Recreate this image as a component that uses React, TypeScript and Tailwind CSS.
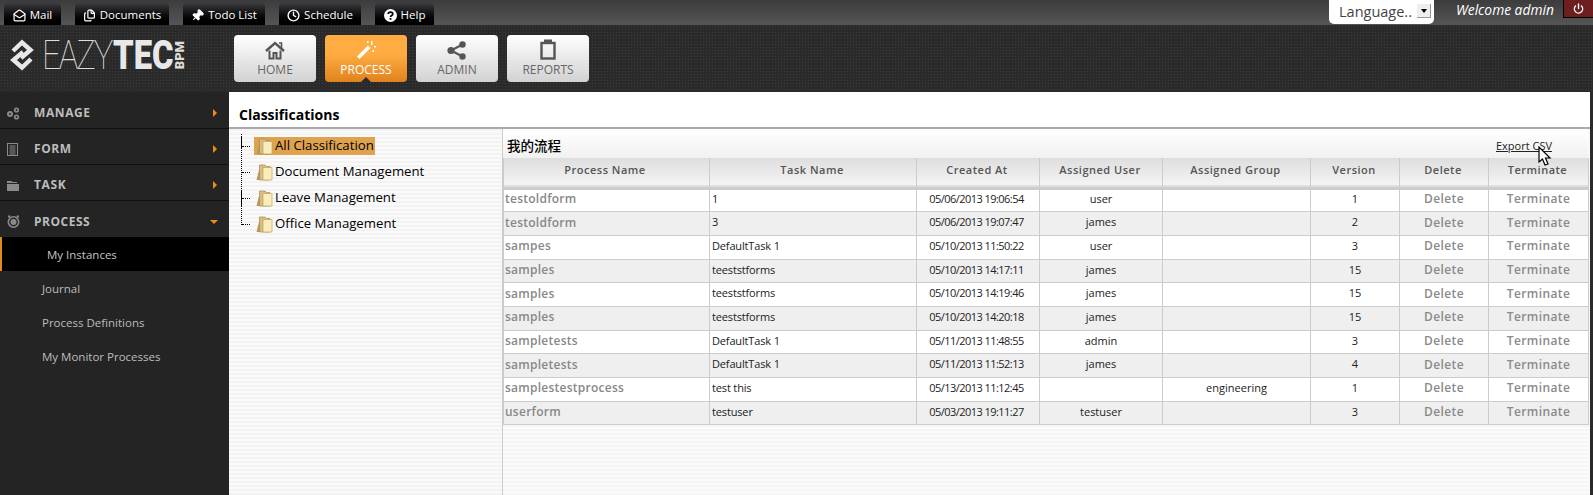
import { MailOpen, Files, Pin, Clock, Power } from 'lucide-react';

const font = "font-['Open_Sans','Noto_Sans_CJK_SC',sans-serif]";

function HelpIcon() {
	return (
		<svg width="13" height="13" viewBox="0 0 13 13">
			<circle cx="6.5" cy="6.5" r="6.5" fill="white" />
			<path d="M4.2 5 C4.3 2.6 8.8 2.6 8.8 5 C8.8 6.6 6.5 6.4 6.5 8" fill="none" stroke="black" strokeWidth="1.7" />
			<rect x="5.6" y="9" width="1.8" height="1.8" fill="black" />
		</svg>
	);
}

function HomeIcon() {
	return (
		<svg width="20" height="19" viewBox="0 0 20 19" fill="none" stroke="#555">
			<path d="M1 10 L10 2 L19 10" strokeWidth="2.4" />
			<path d="M14 2 H16.5 V7" strokeWidth="1.6" />
			<path d="M4.5 9.5 V17.5 H8.5 V12 H11.5 V17.5 H15.5 V9.5" strokeWidth="2" />
		</svg>
	);
}

function WandIcon() {
	return (
		<svg width="20" height="20" viewBox="0 0 20 20" fill="white">
			<path d="M1 16.5 L12 5.5 L14.5 8 L3.5 19 Z" />
			<rect x="15" y="1" width="1.5" height="4" />
			<rect x="18" y="6" width="2" height="1.5" />
			<rect x="11" y="1" width="1.5" height="2" />
			<rect x="16.5" y="10" width="1.5" height="2" />
		</svg>
	);
}

function ShareIcon() {
	return (
		<svg width="20" height="19" viewBox="0 0 20 19" fill="#555">
			<circle cx="4" cy="9.5" r="3.6" />
			<circle cx="15.5" cy="3.5" r="3.2" />
			<circle cx="15.5" cy="15.5" r="3.2" />
			<path d="M4 9.5 L15.5 3.5 M4 9.5 L15.5 15.5" stroke="#555" strokeWidth="2" />
		</svg>
	);
}

function ReportIcon() {
	return (
		<svg width="16" height="21" viewBox="0 0 16 21" fill="none" stroke="#555">
			<rect x="1.5" y="4" width="13" height="15.5" strokeWidth="2.4" />
			<rect x="4.5" y="1" width="7" height="3.5" fill="#555" strokeWidth="1" />
		</svg>
	);
}

function ManageIcon() {
	return (
		<svg width="13" height="13" viewBox="0 0 13 13" fill="#8a8a8a">
			<circle cx="3" cy="7" r="3" />
			<circle cx="9.5" cy="3" r="2.6" />
			<circle cx="9.5" cy="10" r="2.6" />
			<circle cx="3" cy="7" r="1" fill="#242424" />
			<circle cx="9.5" cy="3" r="0.9" fill="#242424" />
			<circle cx="9.5" cy="10" r="0.9" fill="#242424" />
		</svg>
	);
}

function FormIcon() {
	return (
		<svg width="11" height="13" viewBox="0 0 11 13" fill="none" stroke="#8a8a8a">
			<rect x="0.5" y="0.5" width="10" height="12" />
			<path d="M2.5 3 H8.5 M2.5 5 H8.5 M2.5 7 H8.5 M2.5 9 H8.5 M2.5 11 H8.5" />
		</svg>
	);
}

function TaskIcon() {
	return (
		<svg width="12" height="11" viewBox="0 0 12 11" fill="#8a8a8a">
			<path d="M0 1 H4.5 L5.5 2 H10 V3 H0 Z" />
			<rect x="0" y="4" width="12" height="7" />
		</svg>
	);
}

function ProcessIcon() {
	return (
		<svg width="13" height="13" viewBox="0 0 13 13">
			<circle cx="6.5" cy="7" r="5.2" fill="none" stroke="#8a8a8a" strokeWidth="1.6" />
			<circle cx="6.5" cy="7" r="3" fill="#8a8a8a" />
			<rect x="1" y="0.5" width="2.4" height="2" fill="#8a8a8a" />
			<rect x="9.6" y="0.5" width="2.4" height="2" fill="#8a8a8a" />
		</svg>
	);
}

const topTabs = [
	{ label: 'Mail', w: 'w-[57px]', icon: <MailOpen size={13} strokeWidth={2.2} /> },
	{ label: 'Documents', w: 'w-[94px]', icon: <Files size={13} strokeWidth={2.2} /> },
	{ label: 'Todo List', w: 'w-[82px]', icon: <Pin size={13} fill="white" className="rotate-45" /> },
	{ label: 'Schedule', w: 'w-[82px]', icon: <Clock size={13} strokeWidth={2.5} /> },
	{ label: 'Help', w: 'w-[59px]', icon: <HelpIcon /> },
];

const navButtons = [
	{ label: 'HOME', icon: <HomeIcon />, active: false },
	{ label: 'PROCESS', icon: <WandIcon />, active: true },
	{ label: 'ADMIN', icon: <ShareIcon />, active: false },
	{ label: 'REPORTS', icon: <ReportIcon />, active: false },
];

const sideMenu = [
	{ label: 'MANAGE', icon: <ManageIcon /> },
	{ label: 'FORM', icon: <FormIcon /> },
	{ label: 'TASK', icon: <TaskIcon /> },
];

const rows = [
	['testoldform', '1', '05/06/2013 19:06:54', 'user', '', '1'],
	['testoldform', '3', '05/06/2013 19:07:47', 'james', '', '2'],
	['sampes', 'DefaultTask 1', '05/10/2013 11:50:22', 'user', '', '3'],
	['samples', 'teeststforms', '05/10/2013 14:17:11', 'james', '', '15'],
	['samples', 'teeststforms', '05/10/2013 14:19:46', 'james', '', '15'],
	['samples', 'teeststforms', '05/10/2013 14:20:18', 'james', '', '15'],
	['sampletests', 'DefaultTask 1', '05/11/2013 11:48:55', 'admin', '', '3'],
	['sampletests', 'DefaultTask 1', '05/11/2013 11:52:13', 'james', '', '4'],
	['samplestestprocess', 'test this', '05/13/2013 11:12:45', '', 'engineering', '1'],
	['userform', 'testuser', '05/03/2013 19:11:27', 'testuser', '', '3'],
];

const headers = [
	{ label: 'Process Name', w: 'w-[206px]' },
	{ label: 'Task Name', w: 'w-[207px]' },
	{ label: 'Created At', w: 'w-[123px]' },
	{ label: 'Assigned User', w: 'w-[123px]' },
	{ label: 'Assigned Group', w: 'w-[148px]' },
	{ label: 'Version', w: 'w-[89px]' },
	{ label: 'Delete', w: 'w-[89px]' },
	{ label: 'Terminate', w: 'w-[100px]' },
];

const tree = ['All Classification', 'Document Management', 'Leave Management', 'Office Management'];

function FolderIcon() {
	return (
		<svg width="17" height="17" viewBox="0 0 17 17" className="shrink-0">
			<path d="M0.5 16 L3 6 H7 V16 Z" fill="#b99a5c" />
			<path d="M3.5 16 V1 H9 L10.5 2.5 H14 V16 Z" fill="#d8bd80" stroke="#a88a52" strokeWidth="0.7" />
			<path d="M7 16 V3.5 H16 V16 Z" fill="#fbedbb" stroke="#bfa066" strokeWidth="0.7" />
		</svg>
	);
}

function Logo() {
	return (
		<div className="flex w-[190px] items-center">
			<svg width="24" height="32" viewBox="0 0 24 32" className="ml-[10px] shrink-0">
				<path d="M3 12 L12 3.5 L20.5 11 L11 19" fill="none" stroke="#e8e8e8" strokeWidth="4.4" />
				<path d="M21 20 L12 28.5 L3.5 21 L13 13" fill="none" stroke="#e8e8e8" strokeWidth="4.4" />
			</svg>
			<span className="ml-[8px] flex h-[32px] w-[128px] origin-left scale-x-[0.8] items-center whitespace-nowrap font-['Roboto',sans-serif] text-[41px] leading-none text-[#ddd]">
				<span className="font-thin tracking-[-2.5px]">EAZY</span>
				<span className="ml-[2px] font-black text-[#e8e8e8]">TEC</span>
			</span>
			<span className="ml-[4px] w-[12px] rotate-180 whitespace-nowrap font-['Roboto',sans-serif] text-[13px] font-black leading-[12px] text-[#ddd] [writing-mode:vertical-rl]">BPM</span>
		</div>
	);
}

export default function App() {
	return (
		<div className={`flex h-[495px] w-[1593px] flex-col overflow-hidden bg-[#2a2a2a] ${font}`}>
			{/* top strip */}
			<div className="flex h-[25px] items-end justify-between bg-gradient-to-b from-[#3c3c3c] to-[#565656]">
				<div className="flex gap-[14px] pl-[4px]">
					{topTabs.map((t) => (
						<div key={t.label} className={`flex h-[23px] ${t.w} items-center justify-center gap-[4px] rounded-t-[5px] bg-gradient-to-b from-[#3f3f44] to-black pt-[3px] text-[11.5px] text-white`}>
							{t.icon}
							<span>{t.label}</span>
						</div>
					))}
				</div>
				<div className="flex h-[25px] items-start">
					<div className="flex h-[24px] w-[105px] items-center justify-between rounded-b-[5px] bg-white pl-[10px] pr-[3px] text-[14.5px] text-[#444]">
						<span>Language..</span>
						<span className="mb-[2px] flex h-[14px] w-[14px] items-center justify-center border-b border-r border-[#999] bg-[#eee]">
							<span className="h-0 w-0 border-x-[3px] border-t-[4px] border-x-transparent border-t-black" />
						</span>
					</div>
					<span className="ml-[22px] w-[107px] whitespace-nowrap text-[13.8px] italic leading-[19px] text-white">Welcome admin</span>
					<div className="flex h-[18px] w-[30px] items-center justify-center border-b border-l border-black bg-[#6d1f1f] text-white">
						<Power size={11} strokeWidth={3} />
					</div>
				</div>
			</div>

			{/* logo + main nav */}
			<div className="flex h-[67px] items-start bg-[#2a2a2a] bg-[radial-gradient(circle,#3d3d3d_0.7px,transparent_1px)] bg-[size:3px_3px]">
				<div className="mt-[14px] w-[234px]">
					<Logo />
				</div>
				<div className="mt-[10px] flex gap-[9px]">
					{navButtons.map((b) => (
						<div key={b.label} className={`relative flex h-[47px] w-[82px] flex-col items-center justify-end rounded-[4px] pb-[4px] text-[12px] ${b.active ? 'bg-gradient-to-b from-[#ffad42] from-40% to-[#e0821c] text-white' : 'bg-gradient-to-b from-white to-[#d2d2d2] text-[#666]'}`}>
							<span className="mb-[1px]">{b.icon}</span>
							<span className="leading-[17px]">{b.label}</span>
							{b.active && <span className="absolute bottom-0 left-1/2 h-0 w-0 -translate-x-1/2 border-x-[5px] border-b-[5px] border-x-transparent border-b-[#2b2b2b]" />}
						</div>
					))}
				</div>
			</div>

			<div className="flex min-h-0 flex-1 pr-[3px]">
				{/* sidebar */}
				<div className="w-[229px] shrink-0 bg-[#242424]">
					{sideMenu.map((m, i) => (
						<div key={m.label} className={`flex items-center border-b border-[#111] pl-[7px] pr-[12px] text-[#bdbdbd] ${i === 0 ? 'h-[37px] pt-[6px]' : 'h-[36px] pt-[5px]'}`}>
							<span className="flex w-[27px]">{m.icon}</span>
							<span className="flex-1 text-[12px] font-bold tracking-[0.6px]">{m.label}</span>
							<span className="h-0 w-0 border-y-[4px] border-l-[4px] border-y-transparent border-l-[#f28c10]" />
						</div>
					))}
					<div className="flex h-[36px] items-center pl-[7px] pr-[11px] pt-[5px] text-[#bdbdbd]">
						<span className="flex w-[27px]"><ProcessIcon /></span>
						<span className="flex-1 text-[12px] font-bold tracking-[0.5px]">PROCESS</span>
						<span className="h-0 w-0 border-x-[4px] border-t-[4px] border-x-transparent border-t-[#f28c10]" />
					</div>
					<div className="flex h-[34px] items-center border-l-2 border-[#e08a1e] bg-black pl-[45px] pt-[1px] text-[11.5px] text-[#c4c4c4]">My Instances</div>
					{['Journal', 'Process Definitions', 'My Monitor Processes'].map((s) => (
						<div key={s} className="flex h-[34px] items-center pl-[42px] pt-[1px] text-[11.5px] text-[#bdbdbd]">{s}</div>
					))}
				</div>

				{/* main panel */}
				<div className="flex min-w-0 flex-1 flex-col bg-white">
					<div className="flex h-[37px] shrink-0 items-center border-b-2 border-[#aaa] pl-[10px] pt-[10px] text-[14px] font-bold text-black">Classifications</div>
					<div className="flex min-h-0 flex-1">
						{/* tree */}
						<div className="relative w-[273px] shrink-0 bg-[repeating-linear-gradient(0deg,#f3f3f3_0px,#f3f3f3_2px,#fafafa_2px,#fafafa_4px)] pl-[25px] pt-[4px]">
							<div className="absolute left-[12px] top-[5px] h-[91px] border-l border-dotted border-black" />
							<div className="absolute left-[12px] top-[7px] h-[12px] border-l border-black" />
							<div className="absolute left-[12px] top-[62px] h-[15px] border-l border-black" />
							{tree.map((t, i) => (
								<div key={t} className="relative flex h-[26px] items-center">
									<span className="absolute left-[-12px] top-[13px] w-[8px] border-t border-dotted border-black" />
									<div className={`flex h-[18px] items-center gap-[2px] whitespace-nowrap pl-[2px] pr-[1px] text-[13.2px] text-black ${i === 0 ? 'bg-[#dfa24f]' : ''}`}>
										<FolderIcon />
										<span>{t}</span>
									</div>
								</div>
							))}
						</div>

						{/* grid */}
						<div className="min-w-0 flex-1 border-l border-[#ccc] bg-[repeating-linear-gradient(0deg,#f6f6f6_0px,#f6f6f6_2px,#fbfbfb_2px,#fbfbfb_4px)]">
							<div className="flex h-[29px] w-[1085px] items-center justify-between rounded-t-[4px] bg-gradient-to-b from-white to-[#f1f1f1] pl-[4px] pr-[36px] pt-[5px]">
								<span className="text-[13.5px] font-medium text-black">我的流程</span>
								<span className="text-[11px] text-[#222] underline">Export CSV</span>
							</div>
							<table className="w-[1085px] table-fixed border-collapse">
								<thead>
									<tr className="h-[30px] border-b-[3px] border-[#ccc] bg-gradient-to-b from-[#dedede] to-[#f4f4f4]">
										{headers.map((h, i) => (
											<th key={h.label} className={`${h.w} border-x border-[#ccc] pb-[4px] text-center text-[11px] font-semibold tracking-[0.5px] text-[#555] ${i === 0 ? 'pr-[3px]' : 'pr-[2px]'}`}>{h.label}</th>
										))}
									</tr>
								</thead>
								<tbody>
									{rows.map((r, i) => (
										<tr key={i} className={`h-[23.7px] border-b border-[#ccc] text-[11px] text-[#222] ${i % 2 ? 'bg-[#efefef]' : 'bg-white'}`}>
											<td className="border-x border-[#ccc] pb-[2px] pl-[1px] text-[12px] font-semibold tracking-[0.25px] text-[#888]">{r[0]}</td>
											<td className="border-x border-[#ccc] pb-[2px] pl-[2px] tracking-[-0.15px]">{r[1]}</td>
											<td className="border-x border-[#ccc] pb-[2px] pr-[3px] text-center tracking-[-0.55px]">{r[2]}</td>
											<td className="border-x border-[#ccc] pb-[2px] text-center">{r[3]}</td>
											<td className="border-x border-[#ccc] pb-[2px] text-center">{r[4]}</td>
											<td className="border-x border-[#ccc] pb-[2px] text-center">{r[5]}</td>
											<td className="border-x border-[#ccc] pb-[2px] text-center text-[12px] font-semibold tracking-[0.4px] text-[#8a8a8a]">Delete</td>
											<td className="border-x border-[#ccc] pb-[2px] text-center text-[12px] font-semibold tracking-[0.4px] text-[#8a8a8a]">Terminate</td>
										</tr>
									))}
								</tbody>
							</table>
						</div>
					</div>
				</div>
			</div>

			{/* mouse pointer from the capture */}
			<svg width="14" height="20" viewBox="0 0 14 20" className="absolute left-[1538px] top-[146px]">
				<path d="M1 1 V16 L4.5 13 L7 19 L10 18 L7.5 12 L12 12 Z" fill="white" stroke="black" strokeWidth="1.2" />
			</svg>
		</div>
	);
}
